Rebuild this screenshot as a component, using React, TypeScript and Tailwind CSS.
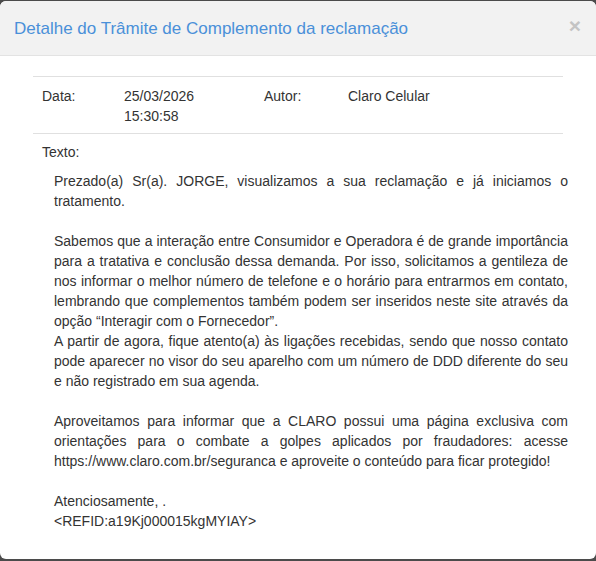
const paragraphs = [
  "Prezado(a) Sr(a). JORGE, visualizamos a sua reclamação e já iniciamos o tratamento.",
  "",
  "Sabemos que a interação entre Consumidor e Operadora é de grande importância para a tratativa e conclusão dessa demanda. Por isso, solicitamos a gentileza de nos informar o melhor número de telefone e o horário para entrarmos em contato, lembrando que complementos também podem ser inseridos neste site através da opção “Interagir com o Fornecedor”.",
  "A partir de agora, fique atento(a) às ligações recebidas, sendo que nosso contato pode aparecer no visor do seu aparelho com um número de DDD diferente do seu e não registrado em sua agenda.",
  "",
  "Aproveitamos para informar que a CLARO possui uma página exclusiva com orientações para o combate a golpes aplicados por fraudadores: acesse https://www.claro.com.br/seguranca e aproveite o conteúdo para ficar protegido!",
  "",
  "Atenciosamente, .",
  "<REFID:a19Kj000015kgMYIAY>",
];

export default function App() {
  return (
    <div
      className="h-[561px] bg-[#4b4b4b] pt-px pb-[2px]"
      style={{ fontFamily: '"Liberation Sans", Arial, sans-serif' }}
    >
      <div className="h-full overflow-hidden rounded-[6px] bg-white">
        <div className="flex h-[55px] items-center justify-between border-b border-[#e3e3e3] bg-[#f2f2f2] pl-[14px] pr-[15px]">
          <h4 className="text-[17px] leading-none text-[#4a90d9]">
            Detalhe do Trâmite de Complemento da reclamação
          </h4>
          <button className="-mt-[6px] text-[21px] font-bold leading-none text-[#c4c4c4]">×</button>
        </div>
        <div className="px-[33px] pt-[20px] text-[14px] leading-[20px] text-[#333]">
          <div className="border-t border-[#e0e0e0]" />
          <div className="flex pt-[9px] pb-[7px] pl-[9px]">
            <div className="w-[82px]">Data:</div>
            <div className="w-[140px]">
              25/03/2026
              <br />
              15:30:58
            </div>
            <div className="w-[84px]">Autor:</div>
            <div>Claro Celular</div>
          </div>
          <div className="border-t border-[#e0e0e0]" />
          <div className="pt-[8px] pl-[9px]">Texto:</div>
          <div className="mt-[9px] ml-[21px] -mr-[5px] text-justify">
            {paragraphs.map((p, i) =>
              p ? <p key={i}>{p}</p> : <p key={i} className="h-[20px]" />,
            )}
          </div>
        </div>
      </div>
    </div>
  );
}
